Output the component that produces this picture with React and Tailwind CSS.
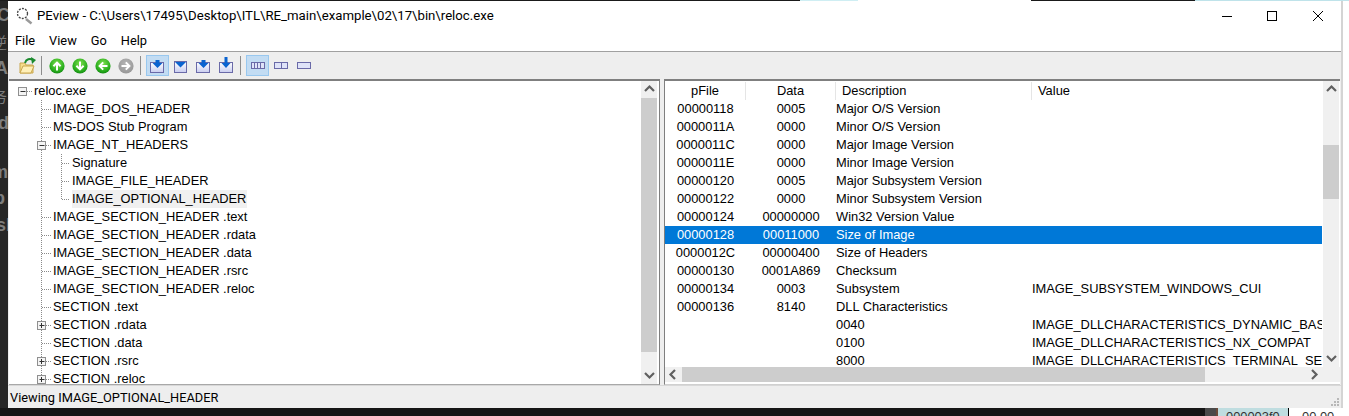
import React from "react";

const font = { fontFamily: '"Liberation Sans", Arial, sans-serif' };
const ui = { fontFamily: 'Roboto, "Noto Sans", sans-serif' };

const tree = [
  { t: "reloc.exe", l: 0, box: "-" },
  { t: "IMAGE_DOS_HEADER", l: 1 },
  { t: "MS-DOS Stub Program", l: 1 },
  { t: "IMAGE_NT_HEADERS", l: 1, box: "-" },
  { t: "Signature", l: 2 },
  { t: "IMAGE_FILE_HEADER", l: 2 },
  { t: "IMAGE_OPTIONAL_HEADER", l: 2, last: true, sel: true },
  { t: "IMAGE_SECTION_HEADER .text", l: 1 },
  { t: "IMAGE_SECTION_HEADER .rdata", l: 1 },
  { t: "IMAGE_SECTION_HEADER .data", l: 1 },
  { t: "IMAGE_SECTION_HEADER .rsrc", l: 1 },
  { t: "IMAGE_SECTION_HEADER .reloc", l: 1 },
  { t: "SECTION .text", l: 1 },
  { t: "SECTION .rdata", l: 1, box: "+" },
  { t: "SECTION .data", l: 1 },
  { t: "SECTION .rsrc", l: 1, box: "+" },
  { t: "SECTION .reloc", l: 1, box: "+" },
];

const rows = [
  ["00000118", "0005", "Major O/S Version", ""],
  ["0000011A", "0000", "Minor O/S Version", ""],
  ["0000011C", "0000", "Major Image Version", ""],
  ["0000011E", "0000", "Minor Image Version", ""],
  ["00000120", "0005", "Major Subsystem Version", ""],
  ["00000122", "0000", "Minor Subsystem Version", ""],
  ["00000124", "00000000", "Win32 Version Value", ""],
  ["00000128", "00011000", "Size of Image", "", true],
  ["0000012C", "00000400", "Size of Headers", ""],
  ["00000130", "0001A869", "Checksum", ""],
  ["00000134", "0003", "Subsystem", "IMAGE_SUBSYSTEM_WINDOWS_CUI"],
  ["00000136", "8140", "DLL Characteristics", ""],
  ["", "", "0040", "IMAGE_DLLCHARACTERISTICS_DYNAMIC_BASE"],
  ["", "", "0100", "IMAGE_DLLCHARACTERISTICS_NX_COMPAT"],
  ["", "", "8000", "IMAGE_DLLCHARACTERISTICS_TERMINAL_SERVER_AWARE"],
];

function Guide({ l, box, last }) {
  const w = l === 0 ? 25 : l === 1 ? 44 : 63;
  const dot = { stroke: "#8a8a8a", strokeWidth: 1, strokeDasharray: "1 1", fill: "none" };
  const bx = l === 0 ? 13.5 : 32.5;
  return (
    <svg width={w} height={18} className="shrink-0 block">
      {l > 0 && <path d="M32.5 0V18" style={dot} />}
      {l === 2 && <path d={last ? "M52.5 0V9" : "M52.5 0V18"} style={dot} />}
      {l === 0 && <path d="M18 9.5H23" style={dot} />}
      {l === 1 && <path d="M33 9.5H42" style={dot} />}
      {l === 2 && <path d="M53 9.5H61" style={dot} />}
      {box && (
        <g>
          <rect x={bx - 4} y={5.5} width={8} height={8} fill="#f4f4f4" stroke="#8f8f8f" />
          <path d={`M${bx - 2} 9.5H${bx + 3}`} stroke="#333" />
          {box === "+" && <path d={`M${bx} 7V12`} stroke="#333" />}
        </g>
      )}
    </svg>
  );
}

function Chevron({ dir }) {
  const d = {
    up: "M2 8 L6.5 3.5 L11 8",
    down: "M2 4 L6.5 8.5 L11 4",
    left: "M8 2 L3.5 6.5 L8 11",
    right: "M4 2 L8.5 6.5 L4 11",
  }[dir];
  return (
    <svg width="13" height="13" viewBox="0 0 13 13">
      <path d={d} fill="none" stroke="#606060" strokeWidth="2.2" />
    </svg>
  );
}

function Sep() {
  return <div className="w-px h-[19px] bg-[#8d8d8d] shrink-0" />;
}

function Round({ grey, dir }) {
  const arrows = {
    up: "M8 12.5V5M4.4 8.2L8 4.6l3.6 3.6",
    down: "M8 3.5V11M4.4 7.8L8 11.4l3.6-3.6",
    left: "M12.5 8H5M8.2 4.4L4.6 8l3.6 3.6",
    right: "M3.5 8H11M7.8 4.4L11.4 8l-3.6 3.6",
  };
  const gid = grey ? "rgrey" : "rgreen";
  return (
    <svg width="16" height="16" viewBox="0 0 16 16" className="shrink-0">
      <defs>
        <radialGradient id="rgreen" cx="0.5" cy="0.35" r="0.7">
          <stop offset="0" stopColor="#7fe04e" />
          <stop offset="0.7" stopColor="#27ac1c" />
          <stop offset="1" stopColor="#0d7d10" />
        </radialGradient>
        <radialGradient id="rgrey" cx="0.5" cy="0.35" r="0.7">
          <stop offset="0" stopColor="#b6b6b6" />
          <stop offset="1" stopColor="#949494" />
        </radialGradient>
      </defs>
      <circle cx="8" cy="8" r="7.6" fill={`url(#${gid})`} />
      <path d={arrows[dir]} fill="none" stroke="#fff" strokeWidth="2" />
    </svg>
  );
}

function Env({ kind }) {
  return (
    <svg width="18" height="18" viewBox="0 0 18 18">
      <defs>
        <linearGradient id={`e${kind}`} x1="0" y1="0" x2="0" y2="1">
          <stop offset="0" stopColor="#ffffff" />
          <stop offset="1" stopColor="#c9cdf0" />
        </linearGradient>
      </defs>
      {kind === "top" ? (
        <>
          <rect x="2.5" y="4.5" width="12" height="11" fill="url(#etop)" stroke="#6a6aa8" />
          <path d="M3 5h11l-5.5 5.5z" fill="#0a63d0" />
        </>
      ) : (
        <>
          <rect x="1.5" y="5.5" width="13" height="10" fill={`url(#e${kind})`} stroke="#6a6aa8" />
          {kind === "tall" ? (
            <path d="M6.5 0h3v6h3l-4.5 5-4.5-5h3z" fill="#0a63d0" />
          ) : (
            <path d="M6.5 3h4v3h3l-5 5-5-5h3z" fill="#0a63d0" />
          )}
        </>
      )}
    </svg>
  );
}

function Cols({ n }) {
  return (
    <svg width="14" height="8" viewBox="0 0 14 8">
      <rect x="0.5" y="0.5" width="13" height="6" fill="#dfe3f8" stroke="#6a6aa8" />
      {n === 4 && <path d="M3.5 1V7M6.5 1V7M9.5 1V7" stroke="#6a6aa8" />}
      {n === 2 && <path d="M7.5 1V7" stroke="#6a6aa8" />}
    </svg>
  );
}

function Pressed({ children }) {
  return (
    <div className="w-[23px] h-[21px] flex items-center justify-center shrink-0 bg-[#c2dcf3] border border-[#99c8ef]">
      {children}
    </div>
  );
}

function Slot({ children }) {
  return <div className="w-[23px] h-[21px] flex items-center justify-center shrink-0">{children}</div>;
}

export default function App() {
  return (
    <div
      className="w-[1349px] h-[416px] overflow-hidden bg-[#1a1a1a] flex flex-col text-[12.87px] leading-[18px] text-black"
      style={font}
    >
      {/* desktop behind the window, top edge */}
      <div className="h-px shrink-0 flex">
        <div className="w-[800px] bg-[#1a1a1a]" />
        <div className="w-[58px] bg-[#cfeef3]" />
        <div className="w-[173px] bg-white" />
        <div className="w-[164px] bg-[#1a1a1a]" />
        <div className="flex-1 bg-[#bfe3ea]" />
      </div>
      <div className="flex flex-1 min-h-0">
        {/* desktop behind the window, left edge */}
        <div
          className="w-2 shrink-0 bg-[#262626] overflow-hidden text-[#7d7d7d] text-[18px] font-bold whitespace-nowrap pt-[5px]"
          style={{ fontFamily: '"Liberation Sans", "Noto Sans CJK SC", sans-serif' }}
        >
          <div className="h-[28px] leading-[18px] -ml-[3px]">C</div>
          <div className="h-[25px] leading-[18px] -ml-[8px] font-normal text-[15px]">逆</div>
          <div className="h-[29px] leading-[18px] -ml-[5px]">A</div>
          <div className="h-[26px] leading-[18px] -ml-[8px] font-normal text-[15px]">务</div>
          <div className="h-[49px] leading-[18px] -ml-[2px]">d</div>
          <div className="h-[26px] leading-[18px] -ml-[8px]">m</div>
          <div className="h-[27px] leading-[18px] -ml-[6px]">p</div>
          <div className="h-[18px] leading-[18px] -ml-[4px]">sl</div>
        </div>
        {/* window */}
        <div className="w-[1333px] h-[407px] bg-white flex flex-col shrink-0">
          {/* title */}
          <div className="h-[30px] flex items-center shrink-0">
            <svg width="18" height="18" viewBox="0 0 18 18" className="ml-[8px] shrink-0">
              <path d="M10 12L15.5 16.5" stroke="#9a9a9a" strokeWidth="2.5" />
              <circle cx="6.5" cy="6.5" r="5" fill="#fff" stroke="#444" strokeWidth="1.3" strokeDasharray="2 1.2" />
            </svg>
            <span className="ml-[3px] text-[13.2px]" style={ui}>
              PEview - C:\Users\17495\Desktop\ITL\RE_main\example\02\17\bin\reloc.exe
            </span>
            <div className="ml-auto flex items-center">
              <svg width="12" height="12" viewBox="0 0 12 12" className="mr-[33px]"><path d="M1 6.5H11" stroke="#000" /></svg>
              <svg width="12" height="12" viewBox="0 0 12 12" className="mr-[34px]"><rect x="1.5" y="1.5" width="9" height="9" fill="none" stroke="#000" /></svg>
              <svg width="12" height="12" viewBox="0 0 12 12" className="mr-[17px]"><path d="M1 1L11 11M11 1L1 11" stroke="#000" /></svg>
            </div>
          </div>
          {/* menu */}
          <div className="h-[20px] flex items-center shrink-0 pl-[7px] gap-[14px] text-[12.8px]" style={ui}>
            <span>File</span>
            <span>View</span>
            <span>Go</span>
            <span>Help</span>
          </div>
          <div className="h-px bg-[#a0a0a0] shrink-0" />
          {/* toolbar */}
          <div className="h-[27px] bg-[#eeeeee] flex items-center shrink-0 pl-[10px]">
            <svg width="18" height="18" viewBox="0 0 18 18" className="shrink-0">
              <path d="M2 6h5l1 2h7v8H2z" fill="#f7dd8c" stroke="#c9a74f" />
              <path d="M2 16l3-7h11l-3 7z" fill="#fff0b8" stroke="#c9a74f" />
              <path d="M7 6c1-4 5-5 8-3" fill="none" stroke="#1b8a2e" strokeWidth="2" />
              <path d="M13 0l5 3-4 4z" fill="#1b8a2e" />
            </svg>
            <div className="ml-[5px] mr-[7px]"><Sep /></div>
            <div className="flex items-center gap-[7px]">
              <Round dir="up" />
              <Round dir="down" />
              <Round dir="left" />
              <Round grey dir="right" />
            </div>
            <div className="ml-[6px] mr-[5px]"><Sep /></div>
            <Pressed><Env kind="mid" /></Pressed>
            <Slot><Env kind="top" /></Slot>
            <Slot><Env kind="mid2" /></Slot>
            <Slot><Env kind="tall" /></Slot>
            <div className="ml-[2px] mr-[5px]"><Sep /></div>
            <Pressed><Cols n={4} /></Pressed>
            <Slot><Cols n={2} /></Slot>
            <Slot><Cols n={1} /></Slot>
          </div>
          {/* panes */}
          <div className="h-[306px] flex shrink-0 bg-[#eeeeee]">
            {/* tree pane */}
            <div className="w-[651px] ml-px flex border-t-2 border-t-[#7f7f7f] border-r border-r-[#7f7f7f] border-b border-b-[#a8a8a8] bg-white shrink-0">
              <div className="flex-1 min-w-0 overflow-hidden pt-px">
                {tree.map((n) => (
                  <div key={n.t} className="h-[18px] flex items-center whitespace-nowrap">
                    <Guide l={n.l} box={n.box} last={n.last} />
                    <span className={n.sel ? "bg-[#f0f0f0] h-[18px] pr-px" : ""}>{n.t}</span>
                  </div>
                ))}
              </div>
              <div className="w-[16px] mr-[2px] bg-[#f0f0f0] flex flex-col items-center shrink-0">
                <div className="h-[17px] flex items-center justify-center"><Chevron dir="up" /></div>
                <div className="w-full h-[254px] bg-[#cdcdcd]" />
                <div className="flex-1" />
                <div className="h-[17px] flex items-center justify-center"><Chevron dir="down" /></div>
              </div>
            </div>
            <div className="w-[4px] shrink-0" />
            {/* right pane */}
            <div className="w-[676px] flex flex-col border-t-2 border-t-[#7f7f7f] border-l border-l-[#7f7f7f] border-b border-b-[#d0d0d0] bg-white shrink-0">
              <div className="flex flex-1 min-h-0">
                <div className="w-[657px] mr-px shrink-0 overflow-hidden pt-px">
                  <div className="h-[18px] grid grid-cols-[81px_90px_196px_1fr]">
                    <div className="text-center border-r border-r-[#e5e5e5]">pFile</div>
                    <div className="text-center border-r border-r-[#e5e5e5]">Data</div>
                    <div className="pl-[6px] border-r border-r-[#e5e5e5]">Description</div>
                    <div className="pl-[6px]">Value</div>
                  </div>
                  {rows.map((r) => (
                    <div
                      key={r[0] + r[2]}
                      className={`h-[18px] grid grid-cols-[81px_90px_195px_1fr] whitespace-nowrap ${r[4] ? "bg-[#0078d7] text-white" : ""}`}
                    >
                      <div className="text-center">{r[0]}</div>
                      <div className="text-center">{r[1]}</div>
                      <div>{r[2]}</div>
                      <div className="pl-px">{r[3]}</div>
                    </div>
                  ))}
                </div>
                <div className="w-[16px] bg-[#f0f0f0] flex flex-col items-center shrink-0">
                  <div className="h-[17px] flex items-center justify-center"><Chevron dir="up" /></div>
                  <div className="h-[47px]" />
                  <div className="w-full h-[54px] bg-[#cdcdcd]" />
                  <div className="flex-1" />
                  <div className="h-[17px] flex items-center justify-center"><Chevron dir="down" /></div>
                </div>
              </div>
              <div className="h-[15px] flex shrink-0 mb-[2px] bg-[#f0f0f0]">
                <div className="w-[658px] flex shrink-0">
                  <div className="w-[17px] flex items-center justify-center"><Chevron dir="left" /></div>
                  <div className="w-[523px] bg-[#cdcdcd]" />
                  <div className="flex-1" />
                  <div className="w-[17px] flex items-center justify-center"><Chevron dir="right" /></div>
                </div>
              </div>
            </div>
          </div>
          {/* status */}
          <div className="flex-1 min-h-0 bg-[#eeeeee] border-t border-t-[#d8d8d8] flex items-center pl-[2px] pt-px text-[12.8px]" style={ui}>
            <span>Viewing IMAGE_OPTIONAL_HEADER</span>
            <svg width="10" height="10" viewBox="0 0 10 10" className="ml-auto mr-px mt-[8px] shrink-0">
              <path d="M7 1h2v2H7zM4 4h2v2H4zM7 4h2v2H7zM1 7h2v2H1zM4 7h2v2H4zM7 7h2v2H7z" fill="#b8b8b8" />
            </svg>
          </div>
        </div>
        <div className="w-[2px] bg-[#d4d4d4]" />
        <div className="flex-1 bg-white" />
      </div>
      {/* desktop behind the window, bottom edge */}
      <div className="h-2 shrink-0 flex overflow-hidden" style={font}>
        <div className="w-[1205px] bg-[#161616] shrink-0" />
        <div className="w-[11px] bg-[#4a4a4a] shrink-0" />
        <div className="w-[2px] bg-[#6b4a3a] shrink-0" />
        <div className="w-[70px] bg-[#bfdde0] shrink-0 pl-[8px] leading-[18px] text-[#333]">000003f0</div>
        <div className="w-px bg-black shrink-0" />
        <div className="flex-1 bg-white pl-[13px] leading-[18px] text-[#333]">00 00</div>
      </div>
    </div>
  );
}
